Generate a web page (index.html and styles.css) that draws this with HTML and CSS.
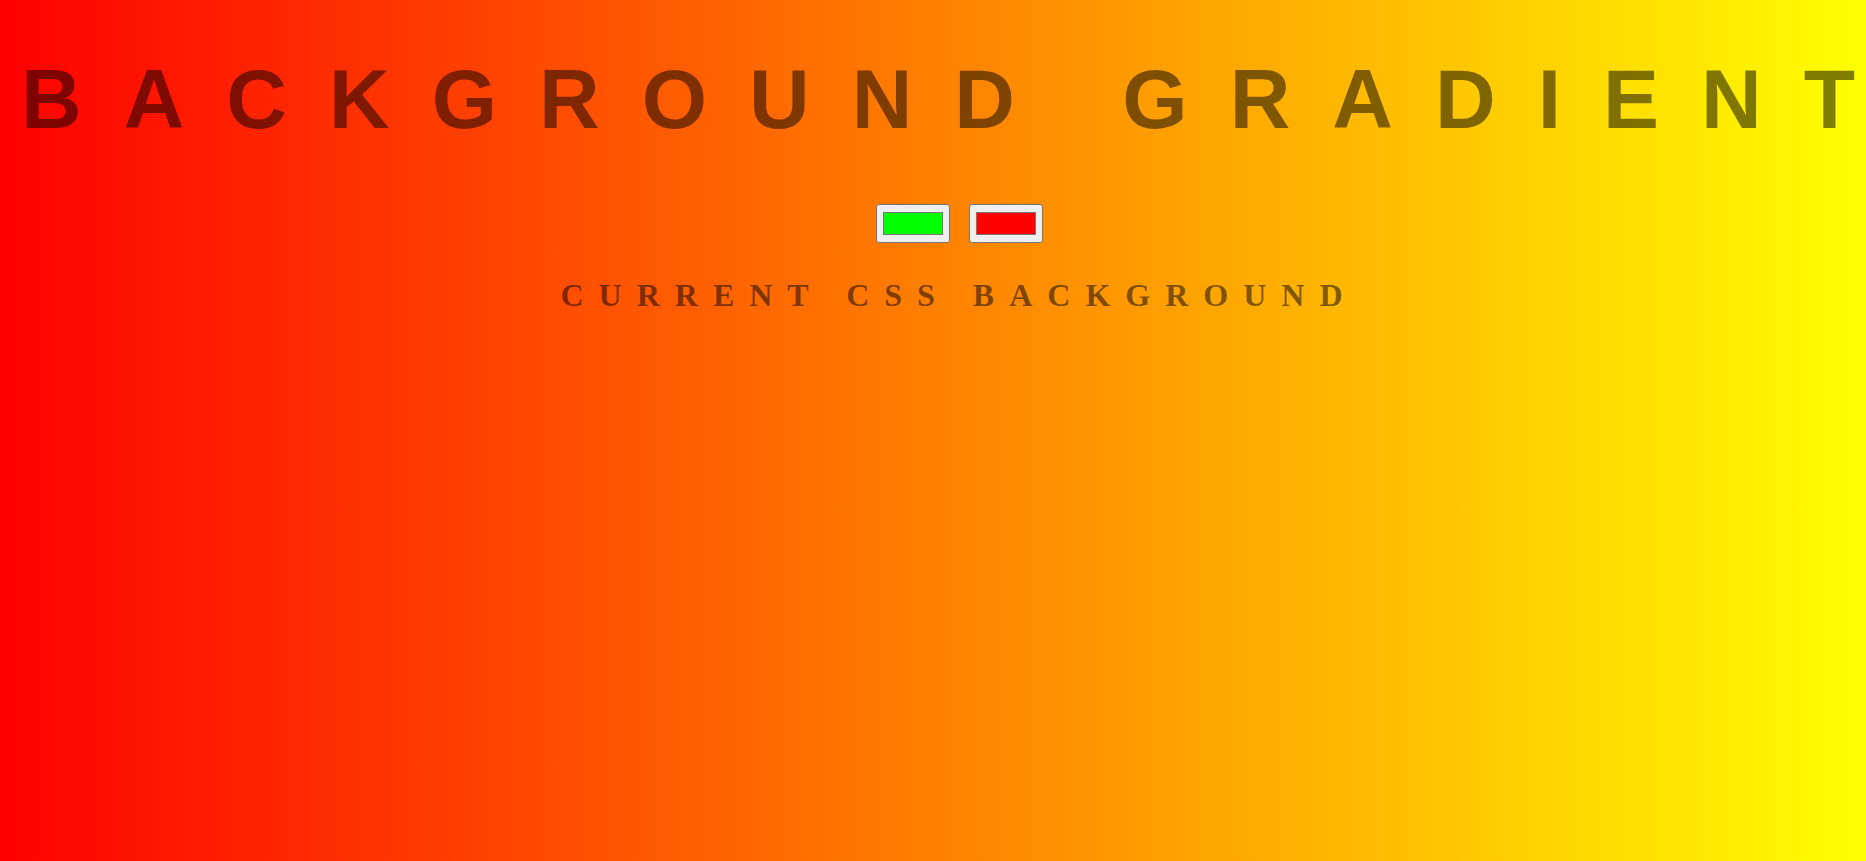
FILE: index.html
```html
<!DOCTYPE html>
<html lang="en">
<head>
<meta charset="utf-8">
<title>Background Generator</title>
<link rel="stylesheet" href="styles.css">
</head>
<body>
  <main class="page">
    <h1 class="title">Background Gradient</h1>
    <div class="pickers">
      <input class="picker" type="color" value="#00ff00" aria-label="First color">
      <input class="picker" type="color" value="#ff0000" aria-label="Second color">
    </div>
    <h3 class="subtitle">Current CSS Background</h3>
  </main>
</body>
</html>
```

FILE: styles.css
```css
html {
  overflow: hidden;
}

body {
  margin: 0;
  min-height: 861px;
  background: linear-gradient(to right, #ff0000, #ffff00);
  color: rgba(0, 0, 0, 0.5);
  text-transform: uppercase;
}

.page {
  width: max-content;
  padding: 51px 0 0 21px;
  text-align: center;
}

.title {
  margin: 0;
  white-space: nowrap;
  font-family: "Liberation Sans", Arial, sans-serif;
  font-weight: 700;
  font-size: 84px;
  line-height: 96px;
  letter-spacing: 42px;
  color: rgba(0, 0, 0, 0.5);
}

.pickers {
  display: flex;
  justify-content: center;
  gap: 19px;
  margin-top: 57px;
  padding-left: 2px;
}

.picker {
  -webkit-appearance: none;
  appearance: none;
  box-sizing: border-box;
  width: 74px;
  height: 39px;
  margin: 0;
  padding: 0;
  border: 1.5px solid #767676;
  border-radius: 3px;
  background: #efefef;
  cursor: pointer;
}

.picker::-webkit-color-swatch-wrapper {
  padding: 7px 6px;
}

.picker::-webkit-color-swatch {
  border: 1.5px solid #777777;
  border-radius: 0;
}

.subtitle {
  margin: 34px 0 0;
  font-family: "Liberation Serif", "Times New Roman", serif;
  font-weight: 700;
  font-size: 32px;
  line-height: 37px;
  letter-spacing: 15px;
  white-space: nowrap;
}
```
